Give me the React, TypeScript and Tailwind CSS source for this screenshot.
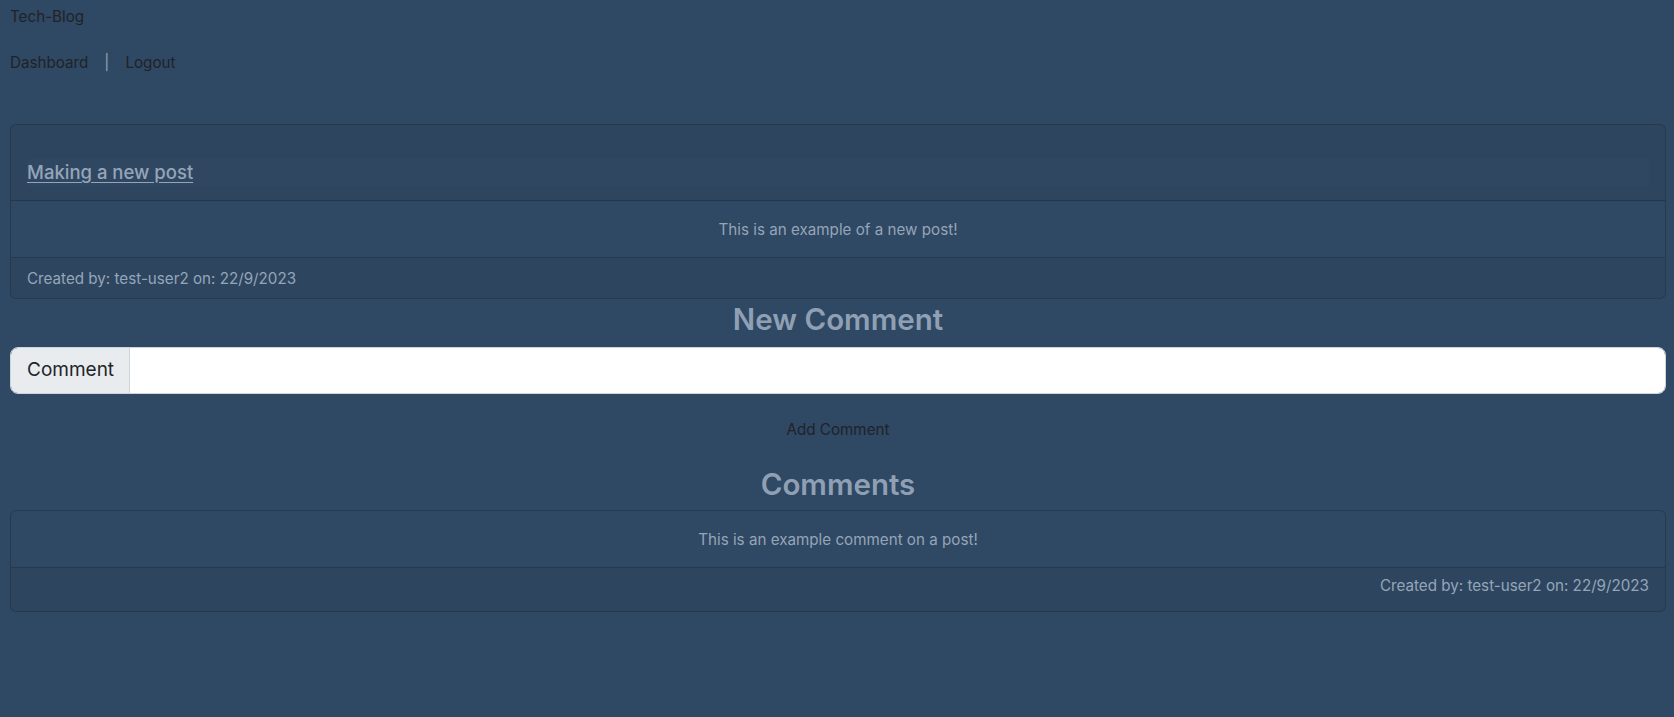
export default function App() {
  return (
    <div className="min-h-[717px] bg-[#2f4863] pl-[10px] pr-[8px] font-['Inter','Helvetica_Neue',sans-serif] text-[15.2px] text-[#1f2328]">
      <header>
        <div className="pt-[5px] leading-6">Tech-Blog</div>
        <nav className="mt-[22px] flex items-center leading-6">
          <span>Dashboard</span>
          <span className="mx-[16px] text-[#94a3b8]">|</span>
          <span>Logout</span>
        </nav>
      </header>

      <main className="mt-[49px]">
        <div className="rounded-md border border-black/20">
          <div className="border-b border-black/20 bg-black/[.04] pt-[34px] pb-[14px] pl-4 pr-4">
            <div className="bg-white/[.015]">
              <a href="#" className="text-[18.5px] font-medium leading-[27px] text-[#95a5b9] underline underline-offset-[3px]">
                Making a new post
              </a>
            </div>
          </div>
          <div className="border-b border-black/20 pt-[17px] pb-[15px] text-center leading-6 text-[#95a5b9]">
            This is an example of a new post!
          </div>
          <div className="bg-black/[.03] px-4 pt-[9px] pb-[7px] leading-6 text-[#95a5b9]">
            Created by: test-user2 on: 22/9/2023
          </div>
        </div>

        <h2 className="mt-[2px] text-center text-[29.5px] font-semibold leading-[36px] text-[#8fa0b5]">New Comment</h2>

        <div className="mt-[10px] flex h-[47px] overflow-hidden rounded-lg border border-[#ced4da]">
          <span className="flex w-[119px] items-center border-r border-[#ced4da] bg-[#e9ecef] px-4 text-[19px] text-[#212529]">
            Comment
          </span>
          <input className="flex-1 bg-white px-4 text-xl outline-none" />
        </div>

        <div className="mt-[24px] text-center leading-6">
          <button className="text-[#1f2328]">Add Comment</button>
        </div>

        <h2 className="mt-[24px] text-center text-[29.5px] font-semibold leading-[36px] text-[#8fa0b5]">Comments</h2>

        <div className="mt-[8px] rounded-md border border-black/20">
          <div className="border-b border-black/20 pt-[17px] pb-[15px] text-center leading-6 text-[#95a5b9]">
            This is an example comment on a post!
          </div>
          <div className="bg-black/[.03] px-4 pt-[6px] pb-[13px] text-right leading-6 text-[#95a5b9]">
            Created by: test-user2 on: 22/9/2023
          </div>
        </div>
      </main>
    </div>
  );
}
